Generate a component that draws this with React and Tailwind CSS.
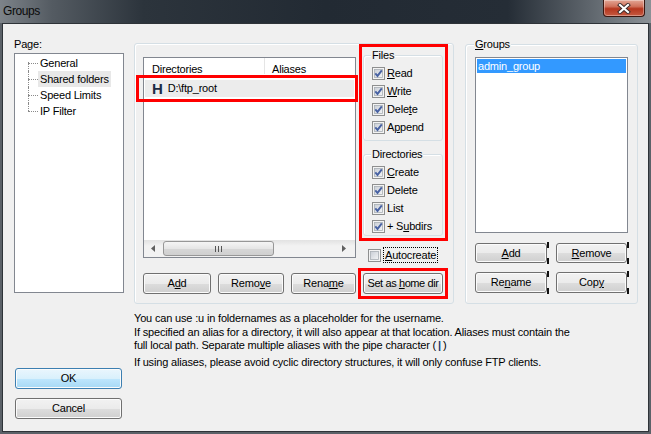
import React from 'react'

const btnBase =
  'relative flex items-center justify-center rounded-[3px] border text-[11px] leading-[13px] shadow-[inset_0_0_0_1px_#fbfbfb]'
const btnGray =
  'border-[#707070] bg-[linear-gradient(#f2f2f2_0%,#ebebeb_50%,#dddddd_51%,#cfcfcf_100%)]'
const btnBlue =
  'border-[#3c7fb1] bg-[linear-gradient(#eaf6fd_0%,#d9f0fc_50%,#bee6fd_51%,#a7d9f5_100%)]'

function Btn({ children, className = '', primary, mark }) {
  return (
    <div className={`${btnBase} ${primary ? btnBlue : btnGray} ${className}`}>
      {children}
      {mark && (
        <>
          <span className="absolute -right-[3px] -top-[2px] h-[6px] w-[2px] bg-[#111]" />
          <span className="absolute -right-[3px] -bottom-[2px] h-[6px] w-[2px] bg-[#111]" />
        </>
      )}
    </div>
  )
}

function Check({ checked }) {
  return (
    <svg width="13" height="13" viewBox="0 0 13 13" className="shrink-0">
      <defs>
        <linearGradient id="cbfill" x1="0" y1="0" x2="1" y2="1">
          <stop offset="0" stopColor="#c9ced6" />
          <stop offset="1" stopColor="#f4f5f6" />
        </linearGradient>
      </defs>
      <rect x="0.5" y="0.5" width="12" height="12" fill="#f3f3f3" stroke="#8e8f8f" />
      <rect x="2.5" y="2.5" width="8" height="8" fill="url(#cbfill)" stroke="#a9aeb5" strokeWidth="0.8" />
      {checked && (
        <path d="M3.3 6.4 L5.5 8.9 L9.8 3.3" fill="none" stroke="#4862a3" strokeWidth="1.9" />
      )}
    </svg>
  )
}

function CheckRow({ children, checked = true }) {
  return (
    <div className="flex h-[18px] items-center gap-[2px]">
      <Check checked={checked} />
      <span>{children}</span>
    </div>
  )
}

function GroupBox({ label, className = '', labelLeft = 'left-[7px]', children }) {
  return (
    <div
      className={`relative rounded-[3px] border border-[#d5dfe5] shadow-[inset_1px_1px_0_#ffffff] ${className}`}
    >
      <span className={`absolute -top-[7px] ${labelLeft} bg-[#f0f0f0] px-[1px] leading-[13px]`}>
        {label}
      </span>
      {children}
    </div>
  )
}

const treeItems = ['General', 'Shared folders', 'Speed Limits', 'IP Filter']

function TreeRow({ label, index, selected }) {
  const first = index === 0
  const last = index === treeItems.length - 1
  return (
    <div className="flex h-[16px] items-center">
      <div className="w-[13px]" />
      <div className="relative h-[16px] w-[10px]">
        <div
          className={`absolute left-0 border-l border-dotted border-[#8a8a8a] ${
            first ? 'top-[7px]' : 'top-0'
          } ${last ? 'bottom-[8px]' : 'bottom-0'}`}
        />
        <div className="absolute left-0 top-[8px] w-[10px] border-t border-dotted border-[#8a8a8a]" />
      </div>
      <span className={`flex h-[16px] items-center px-[2px] ${selected ? 'bg-[#e8e8e8]' : ''}`}>
        {label}
      </span>
    </div>
  )
}

function Tri({ dir }) {
  return (
    <svg width="4" height="7" viewBox="0 0 4 7">
      {dir === 'left' ? <path d="M4 0 L0 3.5 L4 7 Z" fill="#606060" /> : <path d="M0 0 L4 3.5 L0 7 Z" fill="#606060" />}
    </svg>
  )
}

export default function App() {
  return (
    <div className="relative h-[434px] w-[651px] overflow-hidden bg-[#5b6168] font-['Liberation_Sans',Arial,sans-serif] text-[11px] leading-[13px] tracking-[-0.2px] text-black">
      {/* title bar */}
      <div className="flex h-[23px] items-start justify-between bg-[linear-gradient(to_right,#7d8389_0%,#545b62_8%,#2c343c_22%,#222a33_50%,#252d36_78%,#5c636a_90%,#8b9196_100%)]">
        <span className="pl-[3px] pt-[4px] text-[12px] leading-[14px] tracking-[-0.4px] text-[#0a0a0a]">
          Groups
        </span>
        <div className="mr-[6px] flex h-[17px] w-[42px] items-center justify-center rounded-b-[4px] border border-t-0 border-[#3b1710] bg-[linear-gradient(#e3a695_0%,#d0725c_40%,#b5361e_55%,#c65a41_100%)] shadow-[inset_0_0_0_1px_rgba(255,255,255,0.35)]">
          <svg width="14" height="11" viewBox="0 0 14 11">
            <path d="M3 2 L11 9 M11 2 L3 9" stroke="#3a2a2a" strokeWidth="4" strokeLinecap="square" />
            <path d="M3 2 L11 9 M11 2 L3 9" stroke="#ffffff" strokeWidth="2.2" strokeLinecap="square" />
          </svg>
        </div>
      </div>

      {/* client area */}
      <div className="ml-[2px] flex h-[409px] w-[647px] border border-[#2e3338] bg-[#f0f0f0]">
        {/* left column */}
        <div className="ml-[11px] flex w-[110px] flex-col pt-[14px]">
          <div className="h-[13px]">Page:</div>
          <div className="mt-[2px] h-[240px] border border-[#828790] bg-white pt-[1px]">
            {treeItems.map((t, i) => (
              <TreeRow key={t} label={t} index={i} selected={i === 1} />
            ))}
          </div>
          <Btn primary className="ml-[1px] mt-[75px] h-[21px] w-[107px]">
            OK
          </Btn>
          <Btn className="ml-[1px] mt-[9px] h-[21px] w-[107px]">Cancel</Btn>
        </div>

        {/* right area */}
        <div className="ml-[10px] flex w-[504px] flex-col">
          <div className="mt-[19px] flex items-start">
            {/* shared folders page */}
            <div className="flex h-[261px] w-[320px] rounded-[3px] border border-[#d5dfe5] shadow-[inset_1px_1px_0_#ffffff]">
              <div className="ml-[8px] flex w-[213px] flex-col pt-[13px]">
                <div className="flex h-[201px] flex-col border border-[#828790] bg-white">
                  <div className="flex h-[22px] items-center">
                    <div className="w-[120px] pl-[8px]">Directories</div>
                    <div className="h-[16px] w-px self-start bg-[#e5e5e5]" />
                    <div className="pl-[7px]">Aliases</div>
                  </div>
                  <div className="mx-[1px] flex h-[17px] items-center bg-[#ececec]">
                    <span className="ml-[7px] text-[15px] font-bold leading-[15px] text-[#1d2b44]">H</span>
                    <span className="ml-[5px]">{'D:\\ftp_root'}</span>
                  </div>
                  <div className="flex-1" />
                  <div className="flex h-[17px] items-center bg-[linear-gradient(#e2e2e2,#f2f2f2_35%,#f2f2f2)]">
                    <div className="flex h-full w-[17px] items-center justify-center">
                      <Tri dir="left" />
                    </div>
                    <div className="ml-[2px] flex h-[15px] w-[111px] items-center justify-center gap-[2px] rounded-[3px] border border-[#979797] bg-[linear-gradient(#f5f5f5,#e6e6e6_50%,#d7d7d7_51%,#d0d0d0)]">
                      <span className="h-[6px] w-px bg-[#555]" />
                      <span className="h-[6px] w-px bg-[#555]" />
                      <span className="h-[6px] w-px bg-[#555]" />
                    </div>
                    <div className="flex-1" />
                    <div className="flex h-full w-[17px] items-center pl-[4px]">
                      <Tri dir="right" />
                    </div>
                  </div>
                </div>
                <div className="mt-[15px] flex gap-[7px]">
                  <Btn className="h-[21px] w-[68px]">
                    <span>
                      A<span className="underline">d</span>d
                    </span>
                  </Btn>
                  <Btn className="h-[21px] w-[66px]">
                    <span>
                      Remo<span className="underline">v</span>e
                    </span>
                  </Btn>
                  <Btn className="h-[21px] w-[65px]">
                    <span>
                      Rena<span className="underline">m</span>e
                    </span>
                  </Btn>
                </div>
              </div>

              <div className="ml-[7px] flex w-[80px] flex-col pt-[11px]">
                <GroupBox label="Files" className="h-[86px] pl-[8px] pt-[8px]">
                  <CheckRow>
                    <span className="underline">R</span>ead
                  </CheckRow>
                  <CheckRow>
                    <span className="underline">W</span>rite
                  </CheckRow>
                  <CheckRow>
                    Dele<span className="underline">t</span>e
                  </CheckRow>
                  <CheckRow>
                    A<span className="underline">p</span>pend
                  </CheckRow>
                </GroupBox>
                <GroupBox label="Directories" className="mt-[13px] h-[82px] pl-[8px] pt-[8px]">
                  <CheckRow>
                    <span className="underline">C</span>reate
                  </CheckRow>
                  <CheckRow>Delete</CheckRow>
                  <CheckRow>List</CheckRow>
                  <CheckRow>
                    + S<span className="underline">u</span>bdirs
                  </CheckRow>
                </GroupBox>
                <div className="mt-[11px] flex h-[16px] items-center pl-[5px]">
                  <Check />
                  <span className="ml-[2px] h-[16px] border border-dotted border-black px-[1px] leading-[14px]">
                    <span className="underline">A</span>utocreate
                  </span>
                </div>
                <Btn className="mt-[10px] h-[21px] w-[80px] tracking-[-0.4px]">
                  <span>
                    Set as <span className="underline">h</span>ome dir
                  </span>
                </Btn>
              </div>
            </div>

            {/* groups */}
            <GroupBox
              label={
                <>
                  <span className="underline">G</span>roups
                </>
              }
              labelLeft="left-[8px]"
              className="ml-[11px] mt-[1px] h-[260px] w-[173px] pl-[9px] pt-[12px]"
            >
              <div className="h-[176px] w-[153px] border border-[#828790] bg-white p-[1px]">
                <div className="h-[14px] bg-[#3399ff] pl-[1px] leading-[14px] text-white">admin_group</div>
              </div>
              <div className="mt-[10px] flex gap-[9px]">
                <Btn mark className="h-[20px] w-[72px]">
                  <span>
                    <span className="underline">A</span>dd
                  </span>
                </Btn>
                <Btn mark className="h-[20px] w-[71px]">
                  <span>
                    <span className="underline">R</span>emove
                  </span>
                </Btn>
              </div>
              <div className="mt-[9px] flex gap-[9px]">
                <Btn mark className="h-[21px] w-[72px]">
                  <span>
                    Re<span className="underline">n</span>ame
                  </span>
                </Btn>
                <Btn mark className="h-[21px] w-[71px]">
                  <span>
                    Cop<span className="underline">y</span>
                  </span>
                </Btn>
              </div>
            </GroupBox>
          </div>

          <div className="mt-[8px] whitespace-nowrap tracking-[-0.17px]">
            <p className="mb-[1px]">You can use :u in foldernames as a placeholder for the username.</p>
            <p className="mb-[4px]">
              If specified an alias for a directory, it will also appear at that location. Aliases must contain the
              <br />
              full local path. Separate multiple aliases with the pipe character (
              <span className="mx-[2px] font-bold text-[#233b6e]">|</span>)
            </p>
            <p>If using aliases, please avoid cyclic directory structures, it will only confuse FTP clients.</p>
          </div>
        </div>
      </div>

      {/* red annotation frames */}
      <div className="pointer-events-none absolute left-[136px] top-[75px] h-[27px] w-[222px] border-[3px] border-[#ff0000]" />
      <div className="pointer-events-none absolute left-[359px] top-[44px] h-[197px] w-[89px] border-[3px] border-[#ff0000]" />
      <div className="pointer-events-none absolute left-[358px] top-[268px] h-[31px] w-[90px] border-[3px] border-[#ff0000]" />
    </div>
  )
}
